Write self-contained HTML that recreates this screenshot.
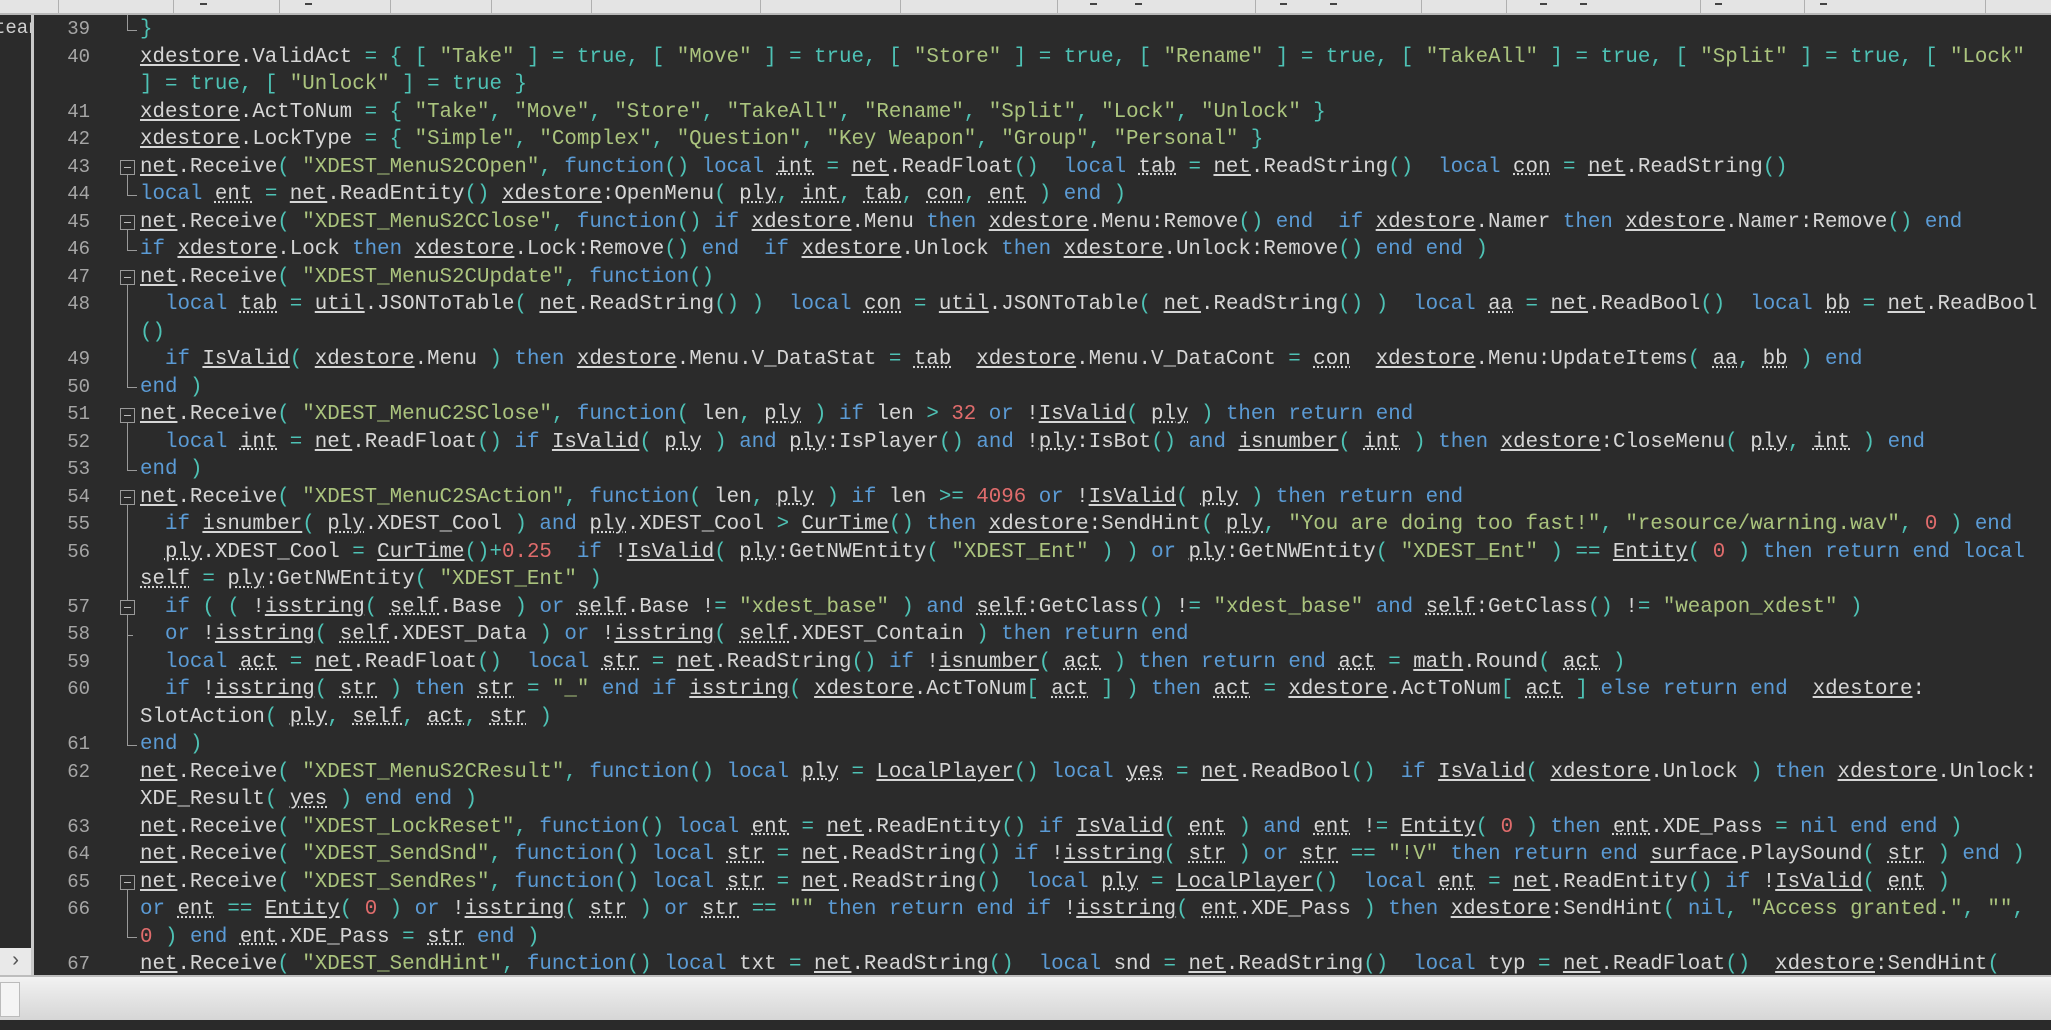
<!DOCTYPE html>
<html><head><meta charset="utf-8"><style>
html,body{margin:0;padding:0;width:2051px;height:1030px;overflow:hidden;background:#2b2b2b;font-family:"Liberation Mono",monospace}
#top{position:absolute;left:0;top:0;width:2051px;height:13px;background:#e4e4e4;border-bottom:2px solid #b8b8b8}
.sep{position:absolute;top:0;width:1px;height:13px;background:#b0b0b0}
.dash{position:absolute;top:3px;width:7px;height:2px;background:#444}
#side{position:absolute;left:0;top:15px;width:31px;height:960px;background:#2b2b2b;border-right:3px solid #c9c9c9;overflow:hidden}
#side .t{position:absolute;left:-6px;top:2px;color:#cfcfcf;font-size:19px}
#arrow{position:absolute;left:0;top:948px;width:31px;height:27px;background:#e9e9e9;color:#555;font-size:20px;text-align:center;line-height:27px}
#bot{position:absolute;left:0;top:975px;width:2051px;height:45px;background:linear-gradient(#f2f2f2,#d6d6d6);border-top:2px solid #bdbdbd;box-sizing:border-box}
#bot .b{position:absolute;left:0;top:5px;width:18px;height:33px;background:#f4f4f4;border:1px solid #bbb}
#dark{position:absolute;left:0;top:1020px;width:2051px;height:10px;background:#2a2a2a}
#code{position:absolute;left:0;top:15px;width:2051px;height:960px;overflow:hidden}
.r{position:absolute;left:140px;height:27.5px;line-height:27.5px;font-size:20.8px;white-space:pre;color:#d6d6d6}
.ln{position:absolute;left:40px;width:50px;text-align:right;height:27.5px;line-height:27.5px;font-size:19px;color:#a6a6a6}
.k{color:#5b9bd5}.s{color:#abc47e}.c{color:#4ec2b5}.n{color:#e06c6c}
.u{text-decoration:underline}.d{text-decoration:underline dotted}
.vl{position:absolute;left:127px;width:1px;background:#9a9a9a}
.bx{position:absolute;left:120px;width:13px;height:13px;border:1px solid #9a9a9a;background:#2b2b2b}
.bx:after{content:"";position:absolute;left:3px;top:6px;width:7px;height:1px;background:#bbb}
.cn{position:absolute;left:127px;width:10px;height:1px;background:#9a9a9a}
</style></head><body>
<div id="top">
<div class="sep" style="left:58px"></div><div class="sep" style="left:173px"></div><div class="sep" style="left:279px"></div><div class="sep" style="left:390px"></div><div class="sep" style="left:491px"></div><div class="sep" style="left:591px"></div><div class="sep" style="left:760px"></div><div class="sep" style="left:900px"></div><div class="sep" style="left:1057px"></div><div class="sep" style="left:1255px"></div><div class="sep" style="left:1421px"></div><div class="sep" style="left:1506px"></div><div class="sep" style="left:1700px"></div><div class="sep" style="left:1804px"></div><div class="sep" style="left:1985px"></div>
<div class="dash" style="left:200px"></div><div class="dash" style="left:305px"></div><div class="dash" style="left:1090px"></div><div class="dash" style="left:1135px"></div><div class="dash" style="left:1280px"></div><div class="dash" style="left:1330px"></div><div class="dash" style="left:1540px"></div><div class="dash" style="left:1580px"></div><div class="dash" style="left:1715px"></div><div class="dash" style="left:1820px"></div>
</div>
<div id="side"><span class="t">tean</span></div>
<div id="arrow">›</div>
<div id="code"></div>
<div id="bot"><div class="b"></div></div>
<div id="dark"></div>
<div id="src" style="display:none">
<p data-n="39">}</p>
<p data-n="40">xdestore.ValidAct = { [ "Take" ] = true, [ "Move" ] = true, [ "Store" ] = true, [ "Rename" ] = true, [ "TakeAll" ] = true, [ "Split" ] = true, [ "Lock"</p>
<p data-n="">] = true, [ "Unlock" ] = true }</p>
<p data-n="41">xdestore.ActToNum = { "Take", "Move", "Store", "TakeAll", "Rename", "Split", "Lock", "Unlock" }</p>
<p data-n="42">xdestore.LockType = { "Simple", "Complex", "Question", "Key Weapon", "Group", "Personal" }</p>
<p data-n="43">net.Receive( "XDEST_MenuS2COpen", function() local int = net.ReadFloat()  local tab = net.ReadString()  local con = net.ReadString()</p>
<p data-n="44">local ent = net.ReadEntity() xdestore:OpenMenu( ply, int, tab, con, ent ) end )</p>
<p data-n="45">net.Receive( "XDEST_MenuS2CClose", function() if xdestore.Menu then xdestore.Menu:Remove() end  if xdestore.Namer then xdestore.Namer:Remove() end</p>
<p data-n="46">if xdestore.Lock then xdestore.Lock:Remove() end  if xdestore.Unlock then xdestore.Unlock:Remove() end end )</p>
<p data-n="47">net.Receive( "XDEST_MenuS2CUpdate", function()</p>
<p data-n="48">  local tab = util.JSONToTable( net.ReadString() )  local con = util.JSONToTable( net.ReadString() )  local aa = net.ReadBool()  local bb = net.ReadBool</p>
<p data-n="">()</p>
<p data-n="49">  if IsValid( xdestore.Menu ) then xdestore.Menu.V_DataStat = tab  xdestore.Menu.V_DataCont = con  xdestore.Menu:UpdateItems( aa, bb ) end</p>
<p data-n="50">end )</p>
<p data-n="51">net.Receive( "XDEST_MenuC2SClose", function( len, ply ) if len > 32 or !IsValid( ply ) then return end</p>
<p data-n="52">  local int = net.ReadFloat() if IsValid( ply ) and ply:IsPlayer() and !ply:IsBot() and isnumber( int ) then xdestore:CloseMenu( ply, int ) end</p>
<p data-n="53">end )</p>
<p data-n="54">net.Receive( "XDEST_MenuC2SAction", function( len, ply ) if len >= 4096 or !IsValid( ply ) then return end</p>
<p data-n="55">  if isnumber( ply.XDEST_Cool ) and ply.XDEST_Cool > CurTime() then xdestore:SendHint( ply, "You are doing too fast!", "resource/warning.wav", 0 ) end</p>
<p data-n="56">  ply.XDEST_Cool = CurTime()+0.25  if !IsValid( ply:GetNWEntity( "XDEST_Ent" ) ) or ply:GetNWEntity( "XDEST_Ent" ) == Entity( 0 ) then return end local</p>
<p data-n="">self = ply:GetNWEntity( "XDEST_Ent" )</p>
<p data-n="57">  if ( ( !isstring( self.Base ) or self.Base != "xdest_base" ) and self:GetClass() != "xdest_base" and self:GetClass() != "weapon_xdest" )</p>
<p data-n="58">  or !isstring( self.XDEST_Data ) or !isstring( self.XDEST_Contain ) then return end</p>
<p data-n="59">  local act = net.ReadFloat()  local str = net.ReadString() if !isnumber( act ) then return end act = math.Round( act )</p>
<p data-n="60">  if !isstring( str ) then str = "_" end if isstring( xdestore.ActToNum[ act ] ) then act = xdestore.ActToNum[ act ] else return end  xdestore:</p>
<p data-n="">SlotAction( ply, self, act, str )</p>
<p data-n="61">end )</p>
<p data-n="62">net.Receive( "XDEST_MenuS2CResult", function() local ply = LocalPlayer() local yes = net.ReadBool()  if IsValid( xdestore.Unlock ) then xdestore.Unlock:</p>
<p data-n="">XDE_Result( yes ) end end )</p>
<p data-n="63">net.Receive( "XDEST_LockReset", function() local ent = net.ReadEntity() if IsValid( ent ) and ent != Entity( 0 ) then ent.XDE_Pass = nil end end )</p>
<p data-n="64">net.Receive( "XDEST_SendSnd", function() local str = net.ReadString() if !isstring( str ) or str == "!V" then return end surface.PlaySound( str ) end )</p>
<p data-n="65">net.Receive( "XDEST_SendRes", function() local str = net.ReadString()  local ply = LocalPlayer()  local ent = net.ReadEntity() if !IsValid( ent )</p>
<p data-n="66">or ent == Entity( 0 ) or !isstring( str ) or str == "" then return end if !isstring( ent.XDE_Pass ) then xdestore:SendHint( nil, "Access granted.", "",</p>
<p data-n="">0 ) end ent.XDE_Pass = str end )</p>
<p data-n="67">net.Receive( "XDEST_SendHint", function() local txt = net.ReadString()  local snd = net.ReadString()  local typ = net.ReadFloat()  xdestore:SendHint(</p>
</div>
<script>
var KW={local:1,"function":1,"if":1,then:1,end:1,"return":1,and:1,or:1,not:1,"else":1,nil:1};
var G={net:1,xdestore:1,util:1,math:1,surface:1,IsValid:1,isnumber:1,isstring:1,CurTime:1,Entity:1,LocalPlayer:1};
var L={ply:1,"int":1,ent:1,str:1,act:1,self:1,aa:1,bb:1,tab:1,con:1,yes:1};
function esc(s){return s.replace(/&/g,"&amp;").replace(/</g,"&lt;").replace(/>/g,"&gt;");}
function hl(t){
 var re=/("[^"]*"?)|([A-Za-z_][A-Za-z0-9_]*)|(\d+(?:\.\d+)?)|([(){}\[\]=<>+,])|(\s+|.)/g,m,o="";
 while((m=re.exec(t))){
  if(m[1])o+='<span class="s">'+esc(m[1])+'</span>';
  else if(m[2]){var w=m[2];
   if(KW[w])o+='<span class="k">'+w+'</span>';
   else if(w=="true")o+='<span class="c">'+w+'</span>';
   else if(G[w])o+='<span class="u">'+w+'</span>';
   else if(L[w])o+='<span class="d">'+w+'</span>';
   else o+=w;}
  else if(m[3])o+='<span class="n">'+m[3]+'</span>';
  else if(m[4])o+='<span class="c">'+esc(m[4])+'</span>';
  else o+=esc(m[5]);
 }
 return o;
}
var ps=document.querySelectorAll("#src p"),code=document.getElementById("code"),h="";
var TOP=1,LH=27.5;
for(var i=0;i<ps.length;i++){
 var y=TOP+i*LH,n=ps[i].getAttribute("data-n");
 h+='<div class="ln" style="top:'+y+'px">'+n+'</div>';
 h+='<div class="r" style="top:'+y+'px">'+hl(ps[i].textContent)+'</div>';
}
function cy(i){return TOP+i*LH+LH/2;}
var F=[[5,6],[7,8],[9,13],[14,16],[17,26],[31,33]];
for(var j=0;j<F.length;j++){
 var a=F[j][0],b=F[j][1];
 h+='<div class="vl" style="top:'+(cy(a)+7)+'px;height:'+(cy(b)-cy(a)-7)+'px"></div>';
 h+='<div class="bx" style="top:'+(cy(a)-7)+'px"></div>';
 h+='<div class="cn" style="top:'+cy(b)+'px"></div>';
}
h+='<div class="vl" style="top:0px;height:'+cy(0)+'px"></div><div class="cn" style="top:'+cy(0)+'px"></div>';
h+='<div class="bx" style="top:'+(cy(21)-7)+'px"></div><div class="cn" style="top:'+cy(22)+'px;width:6px"></div>';
code.innerHTML=h;
</script>
</body></html>
